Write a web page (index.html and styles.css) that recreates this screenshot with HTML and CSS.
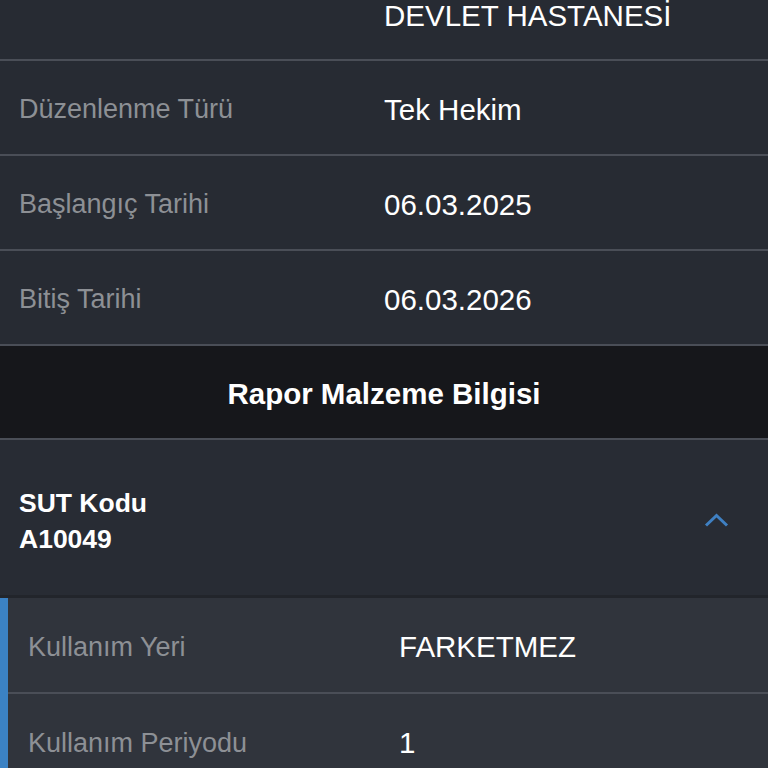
FILE: index.html
```html
<!DOCTYPE html>
<html lang="tr">
<head>
<meta charset="utf-8">
<title>Rapor</title>
<link rel="stylesheet" href="styles.css">
</head>
<body>
<div class="screen">
  <div class="row row-first">
    <div class="label"></div>
    <div class="value">DEVLET HASTANESİ</div>
  </div>
  <div class="row">
    <div class="label">Düzenlenme Türü</div>
    <div class="value">Tek Hekim</div>
  </div>
  <div class="row">
    <div class="label">Başlangıç Tarihi</div>
    <div class="value">06.03.2025</div>
  </div>
  <div class="row">
    <div class="label">Bitiş Tarihi</div>
    <div class="value">06.03.2026</div>
  </div>
  <div class="section-title">Rapor Malzeme Bilgisi</div>
  <div class="acc-head">
    <div class="acc-text">
      <div>SUT Kodu</div>
      <div>A10049</div>
    </div>
    <svg class="chevron" width="26" height="16" viewBox="0 0 26 16">
      <polyline points="2,13.5 12.5,3.5 23,13.5" fill="none" stroke="#3f80c2" stroke-width="3" stroke-linecap="butt" stroke-linejoin="miter"/>
    </svg>
  </div>
  <div class="acc-body">
    <div class="row sub-row">
      <div class="label">Kullanım Yeri</div>
      <div class="value">FARKETMEZ</div>
    </div>
    <div class="row sub-row">
      <div class="label">Kullanım Periyodu</div>
      <div class="value">1</div>
    </div>
  </div>
</div>
</body>
</html>
```

FILE: styles.css
```css
html, body {
  margin: 0;
  padding: 0;
  background: #272b33;
}
body {
  font-family: "Liberation Sans", Arial, Helvetica, sans-serif;
  color: #ffffff;
  overflow: hidden;
  height: 768px;
}
.screen {
  margin-top: -32px;
  display: flex;
  flex-direction: column;
}
.row {
  display: flex;
  align-items: center;
  box-sizing: border-box;
  height: 95px;
  padding: 4px 19px 0 19px;
  border-bottom: 2px solid #4a4e57;
}
.row-first {
  height: 93px;
}
.label {
  flex: 0 0 365px;
  font-size: 27px;
  color: #8d9095;
}
.value {
  font-size: 29.5px;
  color: #ffffff;
  white-space: nowrap;
}
.section-title {
  box-sizing: border-box;
  height: 95px;
  margin-top: -1px;
  background: #16171b;
  border-top: 1px solid #4a4e57;
  border-bottom: 2px solid #4a4e57;
  display: flex;
  align-items: center;
  justify-content: center;
  padding-top: 4px;
  font-size: 29.5px;
  font-weight: bold;
}
.acc-head {
  box-sizing: border-box;
  height: 158px;
  display: flex;
  align-items: center;
  justify-content: space-between;
  padding: 0 38px 0 19px;
  border-bottom: 3px solid #22252b;
  background: #282c34;
}
.acc-text {
  font-size: 26.5px;
  font-weight: bold;
  line-height: 36px;
  padding-top: 7px;
}
.chevron {
  display: block;
  margin-top: 5px;
}
.acc-body {
  background: #30343c;
  border-left: 8px solid #3b82c4;
}
.sub-row {
  height: 96px;
  padding: 4px 0 0 20px;
}
.sub-row .label {
  flex: 0 0 371px;
}
```
